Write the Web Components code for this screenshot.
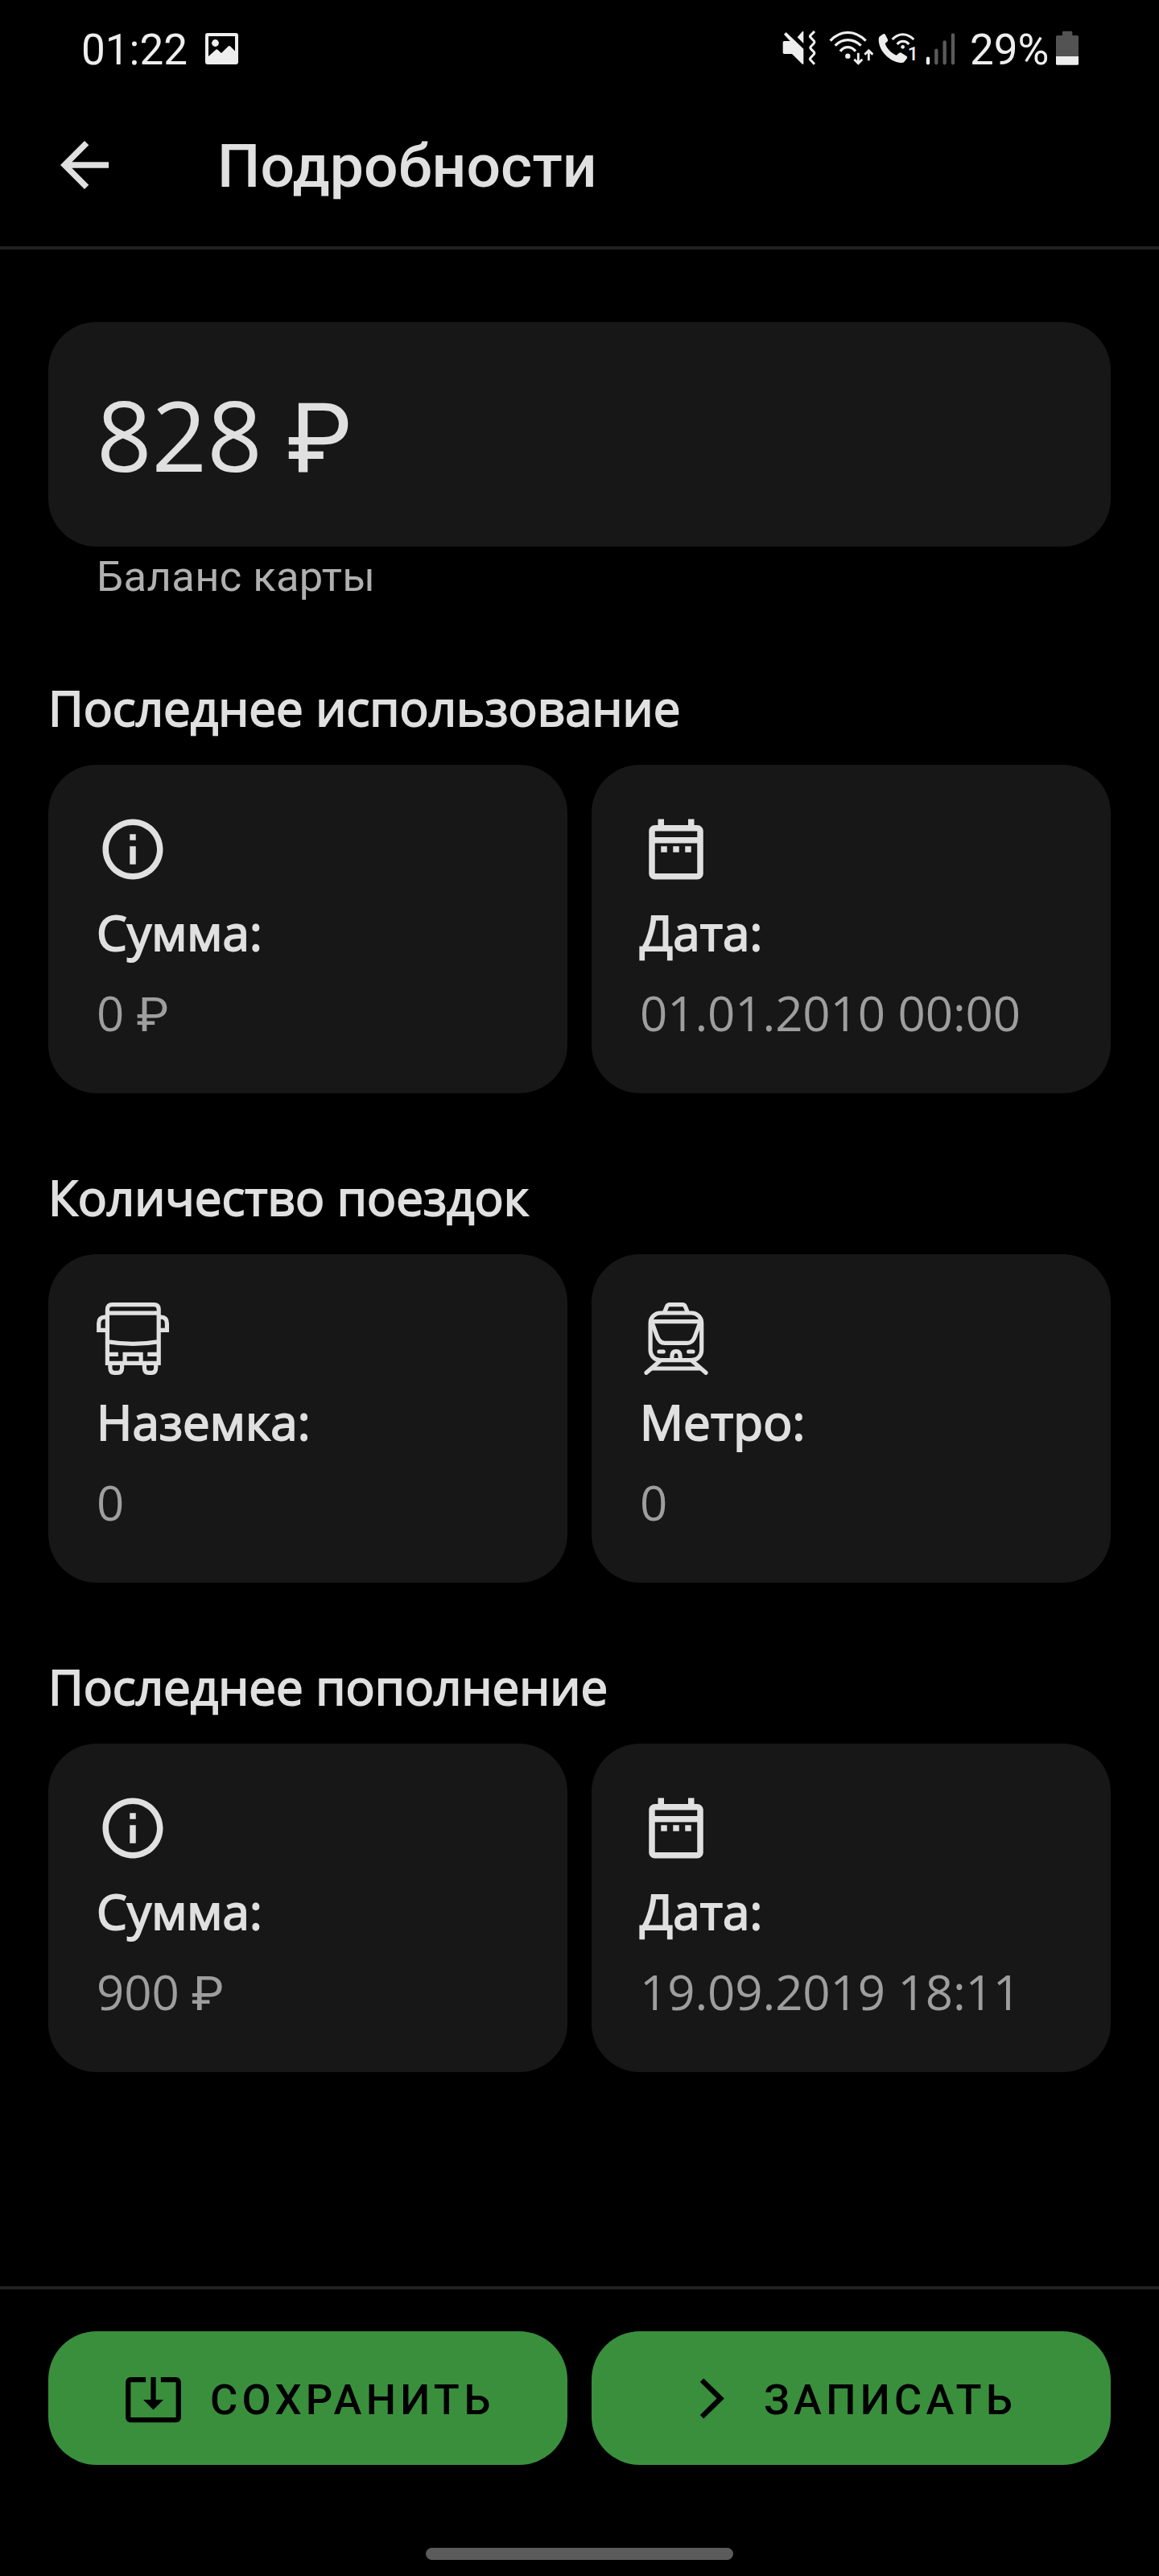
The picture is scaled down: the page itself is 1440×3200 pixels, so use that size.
<!DOCTYPE html>
<html lang="ru">
<head>
<meta charset="utf-8">
<title>Подробности</title>
<style>
html,body{margin:0;background:#000}
</style>
</head>
<body>
<card-details-screen></card-details-screen>
<script>
function define(name, html) {
  const tpl = document.createElement('template');
  tpl.innerHTML = html;
  customElements.define(name, class extends HTMLElement {
    constructor() {
      super();
      this.attachShadow({mode: 'open'}).appendChild(tpl.content.cloneNode(true));
    }
  });
}

const ICONS = {
  back: ['0 0 24 24', '<path fill="currentColor" d="M20 11H7.83l5.59-5.59L12 4l-8 8 8 8 1.41-1.41L7.83 13H20z"/>'],
  info: ['0 0 24 24', '<path fill="currentColor" d="M11 7h2v2h-2zm0 4h2v6h-2zm1-9C6.48 2 2 6.48 2 12s4.48 10 10 10 10-4.48 10-10S17.52 2 12 2zm0 18c-4.41 0-8-3.59-8-8s3.59-8 8-8 8 3.59 8 8-3.59 8-8 8z"/>'],
  date: ['0 0 24 24', '<path fill="currentColor" d="M7 11h2v2H7zm14-5v14c0 1.1-.9 2-2 2H5c-1.11 0-2-.9-2-2l.01-14c0-1.1.88-2 1.99-2h1V2h2v2h8V2h2v2h1c1.1 0 2 .9 2 2zM5 8h14V6H5zm14 12V10H5v10zm-4-7h2v-2h-2zm-4 0h2v-2h-2z"/>'],
  save: ['0 0 24 24', '<path fill="currentColor" d="M12 16.5l4-4h-3v-9h-2v9H8zm9-13h-6v1.99h6v14.03H3V5.49h6V3.5H3c-1.1 0-2 .9-2 2v14c0 1.1.9 2 2 2h18c1.1 0 2-.9 2-2v-14c0-1.1-.9-2-2-2z"/>'],
  next: ['0 0 24 24', '<path fill="currentColor" d="M8.59 18.59 10 20l8.2-8L10 4 8.59 5.41 15.2 12z"/>'],
  bus: ['0 0 90 90', `<g fill="none" stroke="currentColor" stroke-width="5.2">
    <path d="M13.4 75.4V8.6q0-6 6-6H71.2q6 0 6 6V75.4zM13.4 13.1H77.2M13.4 48.6Q45.3 54.2 77.2 48.6"/>
    <path d="M13.4 18.1H10.4Q2.7 18.1 2.7 26V34.4H13.4M77.2 18.1H79.8Q87.4 18.1 87.4 26V34.4H77.2"/>
    <path d="M14 64.4H26.9M63.3 64.4H77M35.1 75.4V64.4H55.1V75.4"/>
    <path d="M16.9 75.4V81Q16.9 87.4 22.4 87.4H26.1Q31.6 87.4 31.6 81V75.4M59.4 75.4V81Q59.4 87.4 64.9 87.4H68.2Q73.7 87.4 73.7 81V75.4"/></g>`],
  train: ['0 0 90 90', `<g fill="none" stroke="currentColor" stroke-width="5.2">
    <rect x="13.1" y="13" width="63.6" height="58.7" rx="12.5"/>
    <path d="M30.2 13 33.4 5.2Q34.6 2.6 37 2.6H52.8Q55.4 2.6 56.5 5.2L59.6 13M13 23.7H77"/>
    <path d="M14.8 24 21.4 42Q24.3 50.3 31 50.3H58.9Q65.6 50.3 68.5 42L75.1 24"/>
    <path d="M39.9 71V67Q39.9 60.6 45 60.6T50.1 67V71M14 82H76"/>
    <path stroke-linecap="round" d="M24 61H29.2M60.7 61H65.9M24.5 73 8 87.3M65.5 73 82 87.3"/></g>`],
  photo: ['0 0 41 39', '<path fill="currentColor" fill-rule="evenodd" d="M3 0H38Q41 0 41 3V36Q41 39 38 39H3Q0 39 0 36V3Q0 0 3 0zM4 4V29L13.5 20.5Q14.5 20 15.4 20.7L20 25 28.6 16.6Q30 15.6 31.2 16.6L37 22.5V4z"/><circle cx="12.5" cy="12.5" r="4.4" fill="currentColor"/>'],
  mute: ['94 54 126 130', `<path fill="currentColor" d="M100 68 108 60 173 122V178Q171 181 167 178L130 141H101Q96 141 96 136V98Q96 93 101 93H123z"/>
    <path fill="currentColor" d="M150 79 169 57Q173 54 173 60V102z"/>
    <path fill="none" stroke="currentColor" stroke-width="9" stroke-linejoin="round" d="M214 57 198 73Q196 76 199 79L212 93Q215 97 212 101L200 114Q197 118 200 122L212 134Q215 138 212 142L199 156Q196 159 198 162L214 179"/>`],
  wifi: ['268 54 166 130', `<g fill="none" stroke="currentColor" stroke-width="10"><path d="M273 92Q301 61 338 61T405 92M291 110Q311 89 338 89T387 110M310 131Q321 116 338 116T367 131"/>
    <path stroke-width="8.5" d="M377 137V176M362 161 377 176 392 161M416 166V129M401 143 416 128 431 143"/></g><circle cx="338" cy="149" r="9.5" fill="currentColor"/>`],
  call: ['452 54 146 130', `<path fill="currentColor" d="M458 76 471 67Q476 64 479 70L488 87Q490 92 486 95L478 102C484 120 500 138 520 146L531 137Q535 134 539 137L559 150Q563 154 559 158L549 171Q546 175 535 174C496 170 455 132 454 88Q454 79 458 76z"/>
    <path fill="none" stroke="currentColor" stroke-width="9" d="M505 87Q522 68 544 68T585 87M523 105Q532 94 545 94T567 105"/><circle cx="544" cy="115" r="7" fill="currentColor"/>`],
  signal: ['630 54 110 130', '<g stroke-width="13" stroke-linecap="round" stroke="#5a5a5a"><path stroke="currentColor" d="M639 158V175"/><path d="M670 128V175M701 97V175M732 70V175"/></g>'],
  battery: ['1116 54 84 130', '<path fill="#535353" d="M1140 74V60Q1140 56 1144 56H1173Q1177 56 1177 60V72H1195Q1200 72 1200 77V152H1116V77Q1116 72 1121 72H1140z"/><path fill="currentColor" d="M1116 150H1200V178Q1200 182 1196 182H1120Q1116 182 1116 178z"/>']
};
customElements.define('ui-icon', class extends HTMLElement {
  constructor() { super(); this.attachShadow({mode: 'open'}); }
  connectedCallback() {
    const [box, body] = ICONS[this.getAttribute('name')];
    this.shadowRoot.innerHTML = `<style>:host{display:block;flex:none;width:var(--w,90px);height:var(--h,90px)}svg{display:block;width:100%;height:100%}</style><svg viewBox="${box}">${body}</svg>`;
  }
});

define('status-bar', `<style>
:host{display:flex;height:104px;box-sizing:border-box;padding:38px 100px 0 101px;color:#eee;font:53px/62px Roboto,sans-serif}
.t{margin-top:-7px;white-space:nowrap}
.sim{margin:14px 0 0 -12px;width:13px;font-size:23px;font-weight:500;line-height:32px}
.grow{flex:1}
ui-icon{--h:43.33px}
</style>
<span class="t">01:22</span><ui-icon name="photo" style="--w:41px;--h:39px;margin:3px 0 0 22px"></ui-icon>
<span class="grow"></span>
<ui-icon name="mute" style="--w:42px"></ui-icon>
<ui-icon name="wifi" style="--w:55.33px;margin-left:16px"></ui-icon>
<ui-icon name="call" style="--w:48.67px;margin-left:6px"></ui-icon><span class="sim">1</span>
<ui-icon name="signal" style="--w:36.67px;margin-left:9.6px"></ui-icon>
<span class="t" style="width:107px;margin-left:18px">29%</span>
<ui-icon name="battery" style="--w:28px"></ui-icon>`);

define('app-bar', `<style>
:host{display:flex;align-items:center;height:206px;box-sizing:border-box;padding-left:60px;gap:120px;border-bottom:4px solid #212121;color:#e0e0e0}
h1{margin:1px 0 0;font:500 75px/88px Roboto,sans-serif;letter-spacing:.15px}
</style><ui-icon name="back"></ui-icon><h1><slot></slot></h1>`);

define('balance-card', `<style>
:host{display:block}
.v{height:279px;box-sizing:border-box;padding:57.5px 60px;border-radius:60px;background:#171717;color:#e0e0e0;font:120px/164px "Open Sans",sans-serif}
.c{height:69px;box-sizing:border-box;padding:6px 60px 0;color:#b0b0b0;font:52.5px/62px Roboto,sans-serif;letter-spacing:.4px}
::slotted(.rub){font-family:Roboto,sans-serif;line-height:1px}
</style><div class="v"><slot></slot></div><div class="c"><slot name="caption"></slot></div>`);

define('info-section', `<style>
:host{display:block}
h2{margin:0 0 30px;font:400 60px/82px "Open Sans",sans-serif;letter-spacing:.04px;-webkit-text-stroke:1.875px currentColor;color:#e0e0e0}
.row{display:grid;grid-template-columns:1fr 1fr;gap:30px}
</style><h2><slot name="title"></slot></h2><div class="row"><slot></slot></div>`);

define('info-card', `<style>
:host{display:flex;flex-direction:column;height:408px;box-sizing:border-box;padding:60px;gap:17px;border-radius:60px;background:#171717;color:#e0e0e0;font:60px/82px "Open Sans",sans-serif}
.l{-webkit-text-stroke:1.875px currentColor;letter-spacing:.15px}
.v{padding-top:.6px;color:#9e9e9e;letter-spacing:-.1px}
::slotted(.rub){font-family:Roboto,sans-serif;line-height:1px}
</style><slot name="icon"></slot><div class="l"><slot name="label"></slot></div><div class="v"><slot></slot></div>`);

define('action-button', `<style>
:host{display:flex;align-items:center;gap:33px;height:166px;box-sizing:border-box;border-radius:60px;background:#3a8f3d;color:#000;font:500 52.5px/62px Roboto,sans-serif;letter-spacing:5.25px;--w:75px;--h:75px}
span{margin-top:3px;white-space:nowrap}
</style><slot name="icon"></slot><span><slot></slot></span>`);

define('bottom-bar', `<style>
:host{display:block;height:360px;box-sizing:border-box;border-top:4px solid #212121;padding:52px 60px 0}
.row{display:grid;grid-template-columns:1fr 1fr;gap:30px}
.home{width:382px;height:15px;margin:103px auto 0;border-radius:7.5px;background:#5b5b5b}
</style><div class="row"><slot></slot></div><div class="home"></div>`);

define('card-details-screen', `<style>
:host{display:flex;flex-direction:column;width:1440px;height:3200px;background:#000}
main{flex:1;display:flex;flex-direction:column;padding:90px 60px 0}
info-section{margin-bottom:88px}
balance-card{margin-bottom:90px}
</style>
<status-bar></status-bar>
<app-bar>Подробности</app-bar>
<main>
<balance-card>828 <span class="rub">₽</span><span slot="caption">Баланс карты</span></balance-card>
<info-section><span slot="title">Последнее использование</span>
<info-card><ui-icon slot="icon" name="info"></ui-icon><span slot="label">Сумма:</span>0 <span class="rub">₽</span></info-card>
<info-card><ui-icon slot="icon" name="date"></ui-icon><span slot="label">Дата:</span>01.01.2010 00:00</info-card></info-section>
<info-section><span slot="title">Количество поездок</span>
<info-card><ui-icon slot="icon" name="bus"></ui-icon><span slot="label">Наземка:</span>0</info-card>
<info-card><ui-icon slot="icon" name="train"></ui-icon><span slot="label">Метро:</span>0</info-card></info-section>
<info-section><span slot="title">Последнее пополнение</span>
<info-card><ui-icon slot="icon" name="info"></ui-icon><span slot="label">Сумма:</span>900 <span class="rub">₽</span></info-card>
<info-card><ui-icon slot="icon" name="date"></ui-icon><span slot="label">Дата:</span>19.09.2019 18:11</info-card></info-section>
</main>
<bottom-bar>
<action-button style="padding-left:93px"><ui-icon slot="icon" name="save"></ui-icon>СОХРАНИТЬ</action-button>
<action-button style="padding-left:108px;gap:31px"><ui-icon slot="icon" name="next"></ui-icon>ЗАПИСАТЬ</action-button>
</bottom-bar>`);
</script>
</body>
</html>
